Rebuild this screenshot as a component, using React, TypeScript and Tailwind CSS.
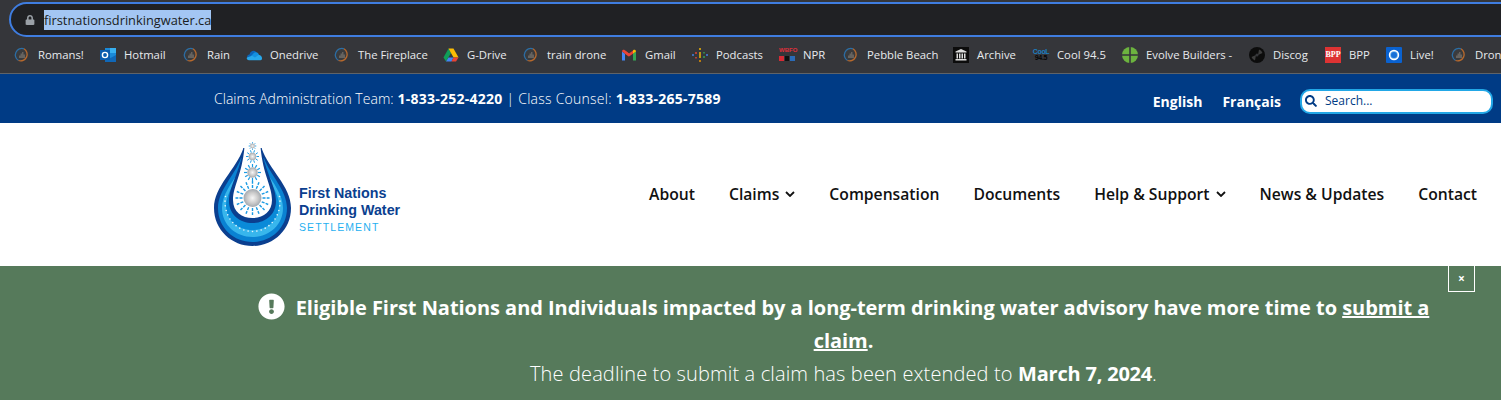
import React from "react";
import { FaLock, FaSearch, FaExclamationCircle } from "react-icons/fa";

const Globe = () => (
  <svg width="16" height="16" viewBox="0 0 16 16">
    <circle cx="8" cy="8" r="6.500" fill="#3a3b3d" />
    <path d="M10 1.800A6.500 6.500 0 0 0 4.500 13.500" fill="none" stroke="#2c6ea5" strokeWidth="1.300" />
    <path d="M10 1.800A6.500 6.500 0 0 1 4.500 13.500" fill="none" stroke="#b8692c" strokeWidth="1.300" />
    <path d="M5 11V8.500h1.500V6.500H8V5h1.500v2.500H11V11z" fill="#66635f" />
  </svg>
);
const Outlook = () => (
  <svg width="16" height="16" viewBox="0 0 16 16">
    <rect x="5" y="1" width="11" height="14" fill="#1a8ad8" />
    <rect x="10" y="1" width="6" height="5" fill="#38b0f0" />
    <path d="M5 8l5.500 3L16 8v7H5z" fill="#1068b8" />
    <rect x="0" y="3" width="10" height="10" fill="#0a5cae" />
    <circle cx="5" cy="8" r="2.600" fill="none" stroke="#fff" strokeWidth="1.400" />
  </svg>
);
const OneDrive = () => (
  <svg width="16" height="16" viewBox="0 0 16 16">
    <path d="M3.500 7.500C4.500 3.500 9 2.500 11 6L7 10.500 1.500 11C.5 9.500 1.500 7.500 3.500 7.500z" fill="#0c64b8" />
    <path d="M7 7C8.500 4.500 12 5 12.800 7.500L15.500 10 9 11.500 5 9z" fill="#1490df" />
    <path d="M1 10.500L6 8.800 9 10.500 12.500 8C14.500 7.800 16.800 10 15.800 12.500 15.500 13 15 13.200 14.500 13.200H3C1 13.200 .3 11.500 1 10.500z" fill="#28a8ea" />
  </svg>
);
const GDrive = () => (
  <svg width="16" height="16" viewBox="0 0 16 16">
    <path d="M5.500 1.500L.5 10.500l2.500 4L8 6z" fill="#0f9d58" />
    <path d="M5.500 1.500h5L15.500 10.500H10.500L8 6z" fill="#fbbc04" />
    <path d="M5.500 10.500h5l-2 4H3z" fill="#4285f4" />
    <path d="M10.500 10.500h5l-2.500 4H8.500z" fill="#ea4335" />
  </svg>
);
const Gmail = () => (
  <svg width="16" height="16" viewBox="0 0 16 16">
    <path d="M1 13.500V4.500l3 2.200v6.800z" fill="#4285f4" />
    <path d="M12 13.500V6.700l3-2.200v9z" fill="#34a853" />
    <path d="M1 4.500C1 3 2.700 2.300 3.800 3.200L8 6.400v3z" fill="#ea4335" />
    <path d="M4 6.700L8 9.500l4-2.800V3.500L8 6.400 4 3.400z" fill="#ea4335" />
    <path d="M15 4.500C15 3 13.300 2.300 12.200 3.200L12 3.400v3.300z" fill="#fbbc04" />
  </svg>
);
const Podcasts = () => (
  <svg width="16" height="16" viewBox="0 0 16 16" strokeWidth="1.400" fill="none">
    <path d="M1 7v2" stroke="#4285f4" />
    <path d="M4 5v2M4 10v1.500" stroke="#ea4335" />
    <path d="M8 1v2M8 5v6" stroke="#fbbc04" />
    <path d="M8 13v2" stroke="#f29900" />
    <path d="M12 5v1.500M12 9v2" stroke="#34a853" />
    <path d="M15 7v2" stroke="#4285f4" />
  </svg>
);
const Npr = () => (
  <div className="flex h-4 w-4 flex-col bg-[#35363a]">
    <span className="h-[7px] text-center font-['Liberation_Sans',sans-serif] text-[6px] leading-[7px] font-bold text-[#e0303a]">WBFO</span>
    <div className="mt-[2px] flex h-[5px] gap-[1px]">
      <span className="flex-1 bg-[#d62b35]" />
      <span className="flex-1 bg-[#111]" />
      <span className="flex-1 bg-[#2a6bb8]" />
    </div>
  </div>
);
const Archive = () => (
  <svg width="16" height="16" viewBox="0 0 16 16">
    <rect width="16" height="16" fill="#0c0c0c" />
    <path d="M8 2l5.500 2.500v1h-11v-1z" fill="#ddd" />
    <path d="M3.500 6.500h1.500v5H3.500zM6 6.500h1.500v5H6zM8.500 6.500H10v5H8.500zM11 6.500h1.500v5H11z" fill="#ddd" />
    <rect x="2.500" y="12" width="11" height="1.500" fill="#ddd" />
  </svg>
);
const Cool = () => (
  <div className="flex h-4 w-4 flex-col items-center justify-center font-['Liberation_Sans',sans-serif] text-[7px] leading-[6px] font-bold tracking-[-0.3px]">
    <span className="text-[#1c7fc0]">CooL</span>
    <span className="text-[#050505]">94.5</span>
  </div>
);
const Evolve = () => (
  <svg width="16" height="16" viewBox="0 0 16 16">
    <circle cx="8" cy="8" r="8" fill="#6cb33f" />
    <path d="M7.200 0h1.600v16H7.200zM0 7.200h16v1.600H0z" fill="#35363a" />
  </svg>
);
const Discog = () => (
  <svg width="16" height="16" viewBox="0 0 16 16">
    <circle cx="8" cy="8" r="8" fill="#0c0c0c" />
    <path d="M10 2.500A6 6 0 0 1 13.500 6L9 8zM6 13.500A6 6 0 0 1 2.500 10L7 8z" fill="#3d3d3d" />
    <circle cx="8" cy="8" r="1.500" fill="#35363a" />
  </svg>
);
const Bpp = () => (
  <div className="flex h-4 w-4 items-center justify-center bg-[#dd3333] font-['Liberation_Serif',serif] text-[8px] font-bold text-white">
    BPP
  </div>
);
const Live = () => (
  <svg width="16" height="16" viewBox="0 0 16 16">
    <rect width="16" height="16" rx="1" fill="#0a62d0" />
    <circle cx="8" cy="8" r="4.500" fill="#6fb2ea" stroke="#fff" strokeWidth="1.400" />
    <circle cx="8" cy="8" r="3" fill="#1670d8" />
  </svg>
);

const bookmarks: [React.ReactNode, string, string][] = [
  [<Globe />, "Romans!", "w-[46px]"],
  [<Outlook />, "Hotmail", "w-[43px]"],
  [<Globe />, "Rain", "w-[23px]"],
  [<OneDrive />, "Onedrive", "w-[48px]"],
  [<Globe />, "The Fireplace", "w-[69px]"],
  [<GDrive />, "G-Drive", "w-[40px]"],
  [<Globe />, "train drone", "w-[58px]"],
  [<Gmail />, "Gmail", "w-[31px]"],
  [<Podcasts />, "Podcasts", "w-[47px]"],
  [<Npr />, "NPR", "w-[24px]"],
  [<Globe />, "Pebble Beach", "w-[70px]"],
  [<Archive />, "Archive", "w-[40px]"],
  [<Cool />, "Cool 94.5", "w-[49px]"],
  [<Evolve />, "Evolve Builders -", "w-[87px]"],
  [<Discog />, "Discog", "w-[36px]"],
  [<Bpp />, "BPP", "w-[21px]"],
  [<Live />, "Live!", "w-[25px]"],
  [<Globe />, "Drone", "w-[40px]"],
];

const Burst = ({ cx, cy, r, rays, inner, outer, w = 1.2 }: { cx: number; cy: number; r: number; rays: number; inner: number; outer: number; w?: number }) => (
  <g>
    {Array.from({ length: rays }).map((_, i) => {
      const a = (i / rays) * Math.PI * 2;
      const c = Math.cos(a);
      const s = Math.sin(a);
      return (
        <line
          key={i}
          x1={cx + c * inner}
          y1={cy + s * inner}
          x2={cx + c * outer}
          y2={cy + s * outer}
          stroke="#1a9be4"
          strokeWidth={w}
          strokeDasharray="3 1.200"
        />
      );
    })}
    <circle cx={cx} cy={cy} r={r} fill="url(#pearl)" />
  </g>
);

const Logo = () => (
  <svg width="82" height="106" viewBox="212 142 82 106" className="shrink-0">
    <defs>
      <radialGradient id="pearl" cx="50%" cy="50%" r="55%">
        <stop offset="0%" stopColor="#f6f6f6" />
        <stop offset="55%" stopColor="#cacaca" />
        <stop offset="100%" stopColor="#98a0a8" />
      </radialGradient>
    </defs>
    <path d="M243.500 148C236 170 214 186 214 208C214 230 232 246 252.500 246C273 246 291 230 291 208C291 186 269 170 261.500 148Z" fill="#0b3f8f" />
    <path d="M241 158C235 175 218 190 218 208C218 228 234 242 252.500 242C271 242 287 228 287 208C287 190 270 175 264 158Z" fill="#0a82d2" />
    <path d="M239 172C232 182 222 195 222 208C222 225 236 237 252.500 237C269 237 283 225 283 208C283 195 273 182 266 172Z" fill="#38b6ec" />
    <path d="M238 176C232 186 226 197 226 205C226 221 238 230 252.500 230C267 230 279 221 279 205C279 197 273 186 267 176Z" fill="#0a8ad8" />
    {Array.from({ length: 23 }).map((_, i) => {
      const a = Math.PI * (-0.06 + (i / 22) * 1.12);
      return <circle key={i} cx={252.500 + Math.cos(a) * 27.500} cy={202 + Math.sin(a) * 29.500} r={0.800} fill="#e8f6fc" />;
    })}
    <path d="M243.500 148C240 172 229 186 229 201C229 215 240 223 252.500 223C265 223 276 215 276 201C276 186 265 172 261.500 148Z" fill="#0b3f8f" />
    <path d="M244.500 147L260.500 147C263 175 272 186 272 200C272 212 263 218 252.500 218C242 218 233 212 233 200C233 186 242 175 244.500 147Z" fill="#fff" />
    <Burst cx={252.500} cy={146} r={2.400} rays={8} inner={2.500} outer={3.800} w={0.9} />
    <Burst cx={252.500} cy={156.500} r={3.800} rays={10} inner={4} outer={6.500} w={1} />
    <Burst cx={252.500} cy={172.500} r={5.200} rays={12} inner={5.500} outer={9} />
    <Burst cx={252.500} cy={198} r={9} rays={16} inner={10} outer={17} w={1.400} />
  </svg>
);

const navItems: [string, boolean][] = [
  ["About", false],
  ["Claims", true],
  ["Compensation", false],
  ["Documents", false],
  ["Help & Support", true],
  ["News & Updates", false],
  ["Contact", false],
];

export default function App() {
  return (
    <div className="flex h-[400px] w-full flex-col overflow-hidden bg-[#567a5b] font-['Open_Sans',sans-serif]">
      {/* browser chrome */}
      <div className="h-[37px] shrink-0 overflow-hidden bg-[#35363a] pt-[2px] pl-[9px]">
        <div className="flex h-[35px] w-[1520px] items-center rounded-l-[18px] border-2 border-[#3f7de0] bg-[#202124] pl-[14px]">
          <FaLock className="text-[10px] text-[#9aa0a6]" />
          <span className="ml-[9px] bg-[#a3c6f3] text-[12.800px] leading-[20px] text-[#1a1d22]">firstnationsdrinkingwater.ca</span>
        </div>
      </div>
      <div className="flex h-[37px] shrink-0 items-center gap-[16px] overflow-hidden border-b border-[#5f6368] bg-[#35363a] pl-[14px]">
        {bookmarks.map(([icon, label, w], i) => (
          <div key={i} className="flex shrink-0 items-center gap-[8px]">
            <span className="flex h-4 w-4 shrink-0 items-center justify-center">{icon}</span>
            <span className={`${w} text-[11.300px] leading-4 whitespace-nowrap text-[#e8eaed]`}>{label}</span>
          </div>
        ))}
      </div>
      {/* blue bar */}
      <div className="flex h-[49px] shrink-0 items-center justify-between bg-[#003b85] pr-[8px] pl-[214px]">
        <div className="text-[14px] font-light tracking-[0.25px] text-white">
          <span className="tracking-[0.03px]">Claims Administration Team:</span> <b className="font-bold">1-833-252-4220</b> | Class Counsel: <b className="font-bold">1-833-265-7589</b>
        </div>
        <div className="mt-[5px] flex items-center">
          <span className="text-[14px] font-bold text-white">English</span>
          <span className="ml-[20px] text-[14px] font-bold text-white">Français</span>
          <div className="ml-[19px] flex h-[25px] w-[193px] items-center rounded-[10px] border-2 border-[#22a7e6] bg-white pl-[3px]">
            <FaSearch className="text-[12px] text-[#003b85]" />
            <span className="ml-[8px] text-[12px] text-[#003b85]">Search...</span>
          </div>
        </div>
      </div>
      {/* white header */}
      <div className="flex h-[143px] shrink-0 items-center justify-between bg-white pr-[24px] pl-[212px]">
        <div className="flex items-end">
          <Logo />
          <div className="mb-[12px] ml-[5px] font-['Liberation_Sans',sans-serif]">
            <div className="text-[14.300px] leading-[17px] font-bold text-[#0b3f8f]">First Nations</div>
            <div className="text-[14.300px] leading-[17px] font-bold whitespace-nowrap text-[#0b3f8f]">Drinking Water</div>
            <div className="text-[10.500px] leading-[17px] tracking-[1.100px] text-[#1fb0f0]">SETTLEMENT</div>
          </div>
        </div>
        <nav className="flex items-center gap-[34px]">
          {navItems.map(([label, chev]) => (
            <div key={label} className="flex items-center gap-[6px] text-[15.700px] font-semibold text-[#111]">
              {label}
              {chev && (
                <svg width="10" height="6" viewBox="0 0 10 6" fill="none" stroke="#111" strokeWidth="1.800">
                  <path d="M1 1l4 4 4-4" />
                </svg>
              )}
            </div>
          ))}
        </nav>
      </div>
      {/* banner */}
      <div className="relative flex flex-1 flex-col items-center pt-[25px] pl-[186px]">
        <button className="absolute top-0 right-[26px] flex h-[26px] w-[27px] items-center justify-center border border-t-0 border-white text-[12px] font-bold text-white">
          ×
        </button>
        <div className="w-[1180px] text-center text-[20px] leading-[33px] font-bold tracking-[-0.04px] text-white">
          <FaExclamationCircle className="-my-2 mr-[11px] inline-block align-[3px] text-[27px]" />
          Eligible First Nations and Individuals impacted by a long-term drinking water advisory have more time to <u>submit a claim</u>.
        </div>
        <div className="text-[20px] leading-[33px] font-light tracking-[0.13px] text-white">
          The deadline to submit a claim has been extended to <b className="font-bold tracking-[-0.2px]">March 7, 2024</b>.
        </div>
      </div>
    </div>
  );
}
